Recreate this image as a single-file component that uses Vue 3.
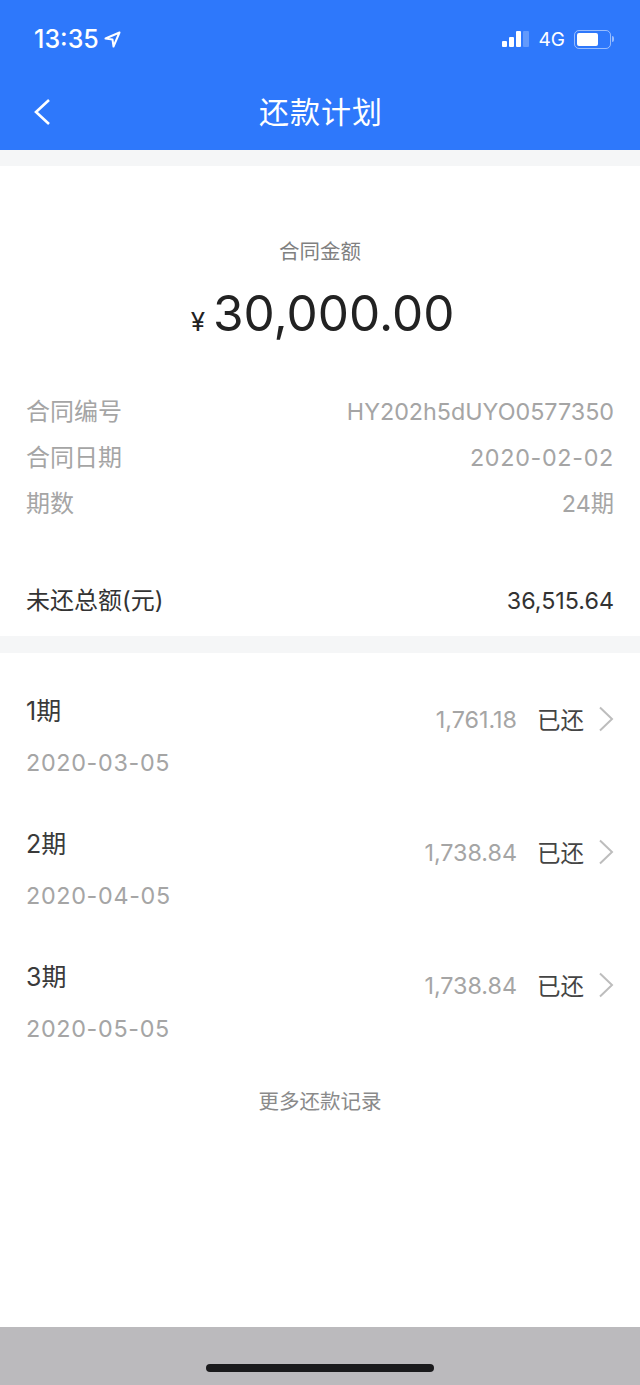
<template>
  <div class="page">
    <header class="header">
      <div class="status">
        <div class="time">
          <span>13:35</span>
          <svg class="arrow" width="17" height="17" viewBox="0 0 17 17"><path d="M15.5 1.5 L1.5 7.5 L8.5 8.5 L9.5 15.5 Z" fill="none" stroke="#fff" stroke-width="2" stroke-linejoin="round"/></svg>
        </div>
        <div class="status-right">
          <div class="signal">
            <i class="b1"></i><i class="b2"></i><i class="b3"></i><i class="b4"></i>
          </div>
          <span class="net">4G</span>
          <div class="battery"><div class="level"></div></div>
          <div class="nub"></div>
        </div>
      </div>
      <div class="nav">
        <svg class="back" width="20" height="28" viewBox="0 0 20 28"><path d="M18 2 L5 14 L18 26" fill="none" stroke="#fff" stroke-width="2.6"/></svg>
        <h1>还款计划</h1>
      </div>
    </header>
    <div class="band top-band"></div>
    <section class="summary">
      <div class="amount-label">合同金额</div>
      <div class="amount"><span class="yen">¥</span>30,000.00</div>
      <div class="info">
        <div v-for="row in infoRows" :key="row.label" class="info-row">
          <span>{{ row.label }}</span>
          <span class="num" :class="{ dashed: row.value.includes('-') }">{{ row.value }}</span>
        </div>
      </div>
      <div class="total">
        <span>未还总额(元)</span>
        <span class="num">36,515.64</span>
      </div>
    </section>
    <div class="band"></div>
    <section class="plans">
      <div v-for="plan in plans" :key="plan.term" class="plan">
        <div class="plan-left">
          <div class="term">{{ plan.term }}</div>
          <div class="date num dashed">{{ plan.date }}</div>
        </div>
        <div class="plan-right">
          <span class="money num">{{ plan.money }}</span>
          <span class="state">已还</span>
          <svg class="chevron" width="16" height="26" viewBox="0 0 16 26"><path d="M2 1.5 L14 13 L2 24.5" fill="none" stroke="#bdbdbd" stroke-width="2"/></svg>
        </div>
      </div>
      <div class="more">更多还款记录</div>
    </section>
    <footer class="home-bar"><div class="indicator"></div></footer>
  </div>
</template>

<script setup>
const infoRows = [
  { label: '合同编号', value: 'HY202h5dUYO0577350' },
  { label: '合同日期', value: '2020-02-02' },
  { label: '期数', value: '24期' }
]

const plans = [
  { term: '1期', date: '2020-03-05', money: '1,761.18' },
  { term: '2期', date: '2020-04-05', money: '1,738.84' },
  { term: '3期', date: '2020-05-05', money: '1,738.84' }
]
</script>

<style>
body {
  background: #fff;
}
</style>

<style scoped>
.page {
  width: 640px;
  height: 1385px;
  display: flex;
  flex-direction: column;
  font-family: Inter, "Noto Sans CJK SC", sans-serif;
  background: #fff;
  overflow: hidden;
}

.header {
  height: 150px;
  background: #2e78fb;
  color: #fff;
  flex-shrink: 0;
}

.status {
  height: 76px;
  box-sizing: border-box;
  padding: 2px 26px 0 34px;
  display: flex;
  justify-content: space-between;
  align-items: center;
}

.time {
  display: flex;
  align-items: center;
  gap: 5px;
  font-size: 25px;
  font-weight: 500;
  line-height: 1;
}

.status-right {
  display: flex;
  align-items: center;
}

.signal {
  display: flex;
  align-items: flex-end;
  gap: 2px;
  height: 16px;
  margin-right: 10px;
}

.signal i {
  display: block;
  width: 5.25px;
  background: #fff;
  border-radius: 1px;
}

.signal .b1 { height: 6px; }
.signal .b2 { height: 10px; }
.signal .b3 { height: 16px; }
.signal .b4 { height: 16px; background: rgba(255, 255, 255, 0.25); }

.net {
  font-size: 19px;
  margin-right: 9px;
}

.battery {
  width: 37px;
  height: 19px;
  box-sizing: border-box;
  border: 1.5px solid rgba(255, 255, 255, 0.5);
  border-radius: 5px;
  padding: 2px;
}

.level {
  width: 21px;
  height: 100%;
  background: #fff;
  border-radius: 2px;
}

.nub {
  width: 2px;
  height: 6px;
  margin-left: 1px;
  background: rgba(255, 255, 255, 0.5);
  border-radius: 0 2px 2px 0;
}

.nav {
  position: relative;
  height: 74px;
  display: flex;
  align-items: center;
  justify-content: center;
}

.back {
  position: absolute;
  left: 31px;
  top: 22px;
}

h1 {
  margin: 0 0 6px;
  padding-left: 2px;
  font-size: 30px;
  font-weight: 400;
  letter-spacing: 1px;
}

.band {
  height: 17px;
  background: #f5f6f7;
  flex-shrink: 0;
}

.top-band {
  height: 16px;
}

.summary {
  padding: 0 26px;
  height: 470px;
  box-sizing: border-box;
  flex-shrink: 0;
}

.amount-label {
  margin-top: 72px;
  text-align: center;
  font-size: 20.5px;
  line-height: 28px;
  color: #808080;
}

.amount {
  margin-top: 17px;
  padding-left: 5px;
  text-align: center;
  font-size: 49.5px;
  line-height: 60px;
  color: #222;
}

.yen {
  font-size: 26px;
  margin-right: 8px;
}

.info {
  margin-top: 37px;
}

.info-row {
  display: flex;
  justify-content: space-between;
  height: 46px;
  line-height: 46px;
  font-size: 24px;
  color: #a5a5a5;
}

.num {
  font-size: 23.3px;
}

.dashed {
  letter-spacing: 0.7px;
}

.total {
  margin-top: 58px;
  display: flex;
  justify-content: space-between;
  font-size: 24px;
  line-height: 32px;
  color: #333;
}

.plans {
  flex: 1;
  padding: 40px 26px 0;
}

.plan {
  height: 133px;
  display: flex;
  justify-content: space-between;
}

.term {
  font-size: 25px;
  line-height: 36px;
  color: #3a3a3a;
}

.date {
  margin-top: 16px;
  line-height: 36px;
  color: #a5a5a5;
}

.plan-right {
  display: flex;
  align-items: center;
  height: 52px;
}

.money {
  color: #a5a5a5;
  margin-right: 20px;
}

.state {
  font-size: 23.5px;
  color: #444;
  margin-right: 14px;
}

.more {
  margin-top: -4px;
  text-align: center;
  font-size: 20.5px;
  line-height: 28px;
  color: #8a8a8a;
}

.home-bar {
  height: 58px;
  background: #bbbabd;
  flex-shrink: 0;
  position: relative;
}

.indicator {
  position: absolute;
  left: 206px;
  top: 37px;
  width: 228px;
  height: 8px;
  border-radius: 4px;
  background: #1a1a1c;
}
</style>
